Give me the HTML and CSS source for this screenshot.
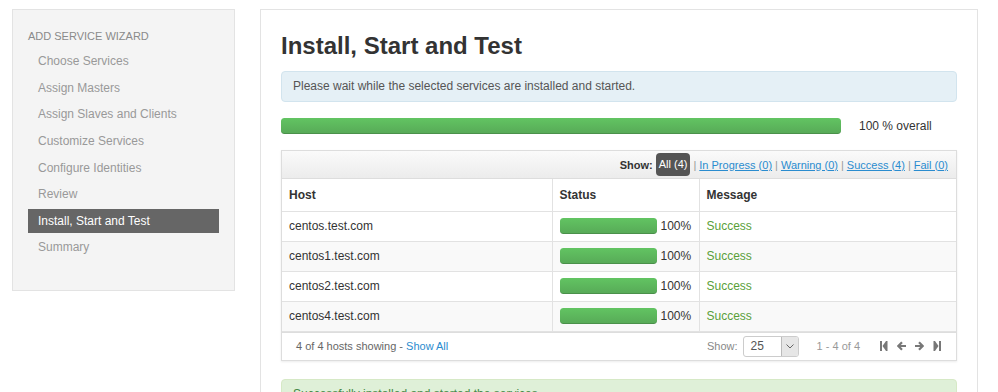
FILE: index.html
```html
<!DOCTYPE html>
<html lang="en">
<head>
    <meta charset="UTF-8">
    <title>Add Service Wizard</title>
    <link rel="stylesheet" href="styles.css">
</head>
<body>
    <div class="wizard-nav">
        <div class="nav-header">ADD SERVICE WIZARD</div>
        <ul class="nav-list">
            <li>Choose Services</li>
            <li>Assign Masters</li>
            <li>Assign Slaves and Clients</li>
            <li>Customize Services</li>
            <li>Configure Identities</li>
            <li>Review</li>
            <li class="active">Install, Start and Test</li>
            <li>Summary</li>
        </ul>
    </div>

    <div class="wizard-content">
        <h2>Install, Start and Test</h2>
        <div class="alert alert-info">Please wait while the selected services are installed and started.</div>

        <div class="overall">
            <div class="progress big"><div class="bar" style="width:100%"></div></div>
            <span class="overall-text">100 % overall</span>
        </div>

        <div class="hosts-box">
            <div class="filter-bar">
                <b>Show:</b>
                <span class="badge-sel">All (4)</span>
                <span class="sep">|</span><a href="#">In Progress (0)</a>
                <span class="sep">|</span><a href="#">Warning (0)</a>
                <span class="sep">|</span><a href="#">Success (4)</a>
                <span class="sep">|</span><a href="#">Fail (0)</a>
            </div>
            <table class="hosts">
                <thead>
                    <tr><th class="c-host">Host</th><th class="c-status">Status</th><th>Message</th></tr>
                </thead>
                <tbody>
                    <tr>
                        <td>centos.test.com</td>
                        <td><div class="status"><div class="progress"><div class="bar" style="width:100%"></div></div><span>100%</span></div></td>
                        <td class="ok">Success</td>
                    </tr>
                    <tr>
                        <td>centos1.test.com</td>
                        <td><div class="status"><div class="progress"><div class="bar" style="width:100%"></div></div><span>100%</span></div></td>
                        <td class="ok">Success</td>
                    </tr>
                    <tr>
                        <td>centos2.test.com</td>
                        <td><div class="status"><div class="progress"><div class="bar" style="width:100%"></div></div><span>100%</span></div></td>
                        <td class="ok">Success</td>
                    </tr>
                    <tr>
                        <td>centos4.test.com</td>
                        <td><div class="status"><div class="progress"><div class="bar" style="width:100%"></div></div><span>100%</span></div></td>
                        <td class="ok">Success</td>
                    </tr>
                </tbody>
            </table>
            <div class="table-foot">
                <div class="showing">4 of 4 hosts showing - <a href="#">Show All</a></div>
                <div class="pager">
                    <span class="show-lbl">Show:</span>
                    <div class="select"><span>25</span><i class="caret">
                        <svg width="8" height="5" viewBox="0 0 8 5"><path d="M0.5 0.5 L4 4 L7.5 0.5" fill="none" stroke="#666" stroke-width="1"/></svg>
                    </i></div>
                    <span class="range">1 - 4 of 4</span>
                    <div class="nav-icons">
                        <svg width="8" height="10" viewBox="0 0 8 10"><rect x="0" y="0" width="2" height="10" fill="#777"/><path d="M7.5 0 L7.5 10 L6 10 L2.5 5 L6 0 Z" fill="#777"/></svg>
                        <svg width="9" height="10" viewBox="0 0 9 10"><path d="M5 1.2 L1.3 5 L5 8.8 M1.3 5 L9 5" fill="none" stroke="#777" stroke-width="2.2"/></svg>
                        <svg width="9" height="10" viewBox="0 0 9 10"><path d="M4 1.2 L7.7 5 L4 8.8 M7.7 5 L0 5" fill="none" stroke="#777" stroke-width="2.2"/></svg>
                        <svg width="8" height="10" viewBox="0 0 8 10"><path d="M0.5 0 L0.5 10 L2 10 L5.5 5 L2 0 Z" fill="#777"/><rect x="6" y="0" width="2" height="10" fill="#777"/></svg>
                    </div>
                </div>
            </div>
        </div>

        <div class="alert alert-success">Successfully installed and started the services.</div>
    </div>
</body>
</html>
```

FILE: styles.css
```css
*{
    margin: 0;
    padding: 0;
    box-sizing: border-box;
}
body{
    font-family: "Liberation Sans", Arial, sans-serif;
    font-size: 13px;
    color: #333;
    background: #fff;
    display: flex;
    align-items: flex-start;
    gap: 25px;
    padding: 9px 0 0 12px;
    overflow: hidden;
    height: 392px;
}
a{
    color: #2a8ccf;
}

/* left wizard steps */
.wizard-nav{
    width: 223px;
    height: 282px;
    background: #f4f4f4;
    border: 1px solid #e3e3e3;
    padding: 19px 15px 0 15px;
}
.nav-header{
    color: #8a8a8a;
    font-size: 11px;
    line-height: 14px;
    height: 14px;
    margin-bottom: 6px;
}
.nav-list{
    list-style: none;
    display: flex;
    flex-direction: column;
    gap: 2.65px;
}
.nav-list li{
    height: 24px;
    line-height: 24px;
    padding-left: 10px;
    color: #999;
    font-size: 12px;
    width: 191px;
}
.nav-list li.active{
    background: #666;
    color: #fff;
}

/* main panel */
.wizard-content{
    width: 718px;
    min-height: 400px;
    border: 1px solid #e3e3e3;
    padding: 21px 20px 0 20px;
}
h2{
    font-size: 24px;
    line-height: 30px;
    color: #333;
    margin-bottom: 10px;
}
.alert{
    border-radius: 4px;
    padding: 0 11px;
    height: 31px;
    line-height: 29px;
    font-size: 12px;
}
.alert-info{
    background: #e5f0f6;
    border: 1px solid #d2e4ee;
    color: #555;
}
.alert-success{
    background: #dff0d8;
    border: 1px solid #d6e9c6;
    color: #468847;
    margin-top: 18px;
}

.overall{
    display: flex;
    align-items: center;
    margin: 16px 0 16px 0;
}
.progress{
    height: 16px;
    border-radius: 3px;
    background: #f5f5f5;
    overflow: hidden;
}
.progress.big{
    width: 560px;
}
.bar{
    height: 100%;
    border-radius: 3px;
    background: linear-gradient(#62c462, #57a957);
    box-shadow: inset 0 -1px 0 rgba(0,0,0,0.15);
}
.overall-text{
    margin-left: 18px;
    font-size: 12px;
}

/* hosts table */
.hosts-box{
    border: 1px solid #ddd;
    box-shadow: 0 1px 2px rgba(0,0,0,0.08);
}
.filter-bar{
    height: 28px;
    display: flex;
    align-items: center;
    justify-content: flex-end;
    padding-right: 8px;
    font-size: 11px;
    color: #333;
    background: linear-gradient(#fafafa, #ececec);
    border-bottom: 1px solid #ddd;
}
.filter-bar b{
    margin-right: 3px;
}
.badge-sel{
    background: #555;
    color: #fff;
    border-radius: 4px;
    padding: 0 3px;
    height: 23px;
    line-height: 23px;
}
.sep{
    color: #999;
    margin: 0 3px;
}
.hosts{
    width: 100%;
    border-collapse: collapse;
    font-size: 12px;
}
.hosts th,
.hosts td{
    text-align: left;
    padding: 0 7px;
    border-right: 1px solid #e2e2e2;
    border-bottom: 1px solid #e2e2e2;
    height: 30px;
}
.hosts th:last-child,
.hosts td:last-child{
    border-right: 0;
}
.hosts th{
    height: 32px;
    font-weight: bold;
}
.c-host{ width: 270px; }
.c-status{ width: 147px; }
.hosts tbody tr:nth-child(even){
    background: #f9f9f9;
}
.status{
    display: flex;
    align-items: center;
    gap: 4px;
}
.status .progress{
    width: 97px;
}
.ok{
    color: #5a9f39;
}

.table-foot{
    height: 28px;
    display: flex;
    justify-content: space-between;
    align-items: center;
    padding: 0 15px 0 14px;
    font-size: 11px;
    color: #666;
    border-top: 1px solid #ddd;
}
.table-foot a{
    text-decoration: none;
}
.pager{
    display: flex;
    align-items: center;
}
.show-lbl{
    color: #888;
    margin-right: 5px;
}
.select{
    width: 56px;
    height: 21px;
    border: 1px solid #ccc;
    border-radius: 3px;
    display: flex;
    align-items: center;
    justify-content: space-between;
    font-size: 12px;
    color: #555;
    padding-left: 7px;
    overflow: hidden;
    background: #fff;
}
.caret{
    width: 17px;
    height: 100%;
    background: #e6e6e6;
    border-left: 1px solid #bbb;
    display: flex;
    align-items: center;
    justify-content: center;
}
.range{
    color: #999;
    margin: 0 20px 0 18px;
}
.nav-icons{
    display: flex;
    gap: 9px;
    align-items: center;
}
```
